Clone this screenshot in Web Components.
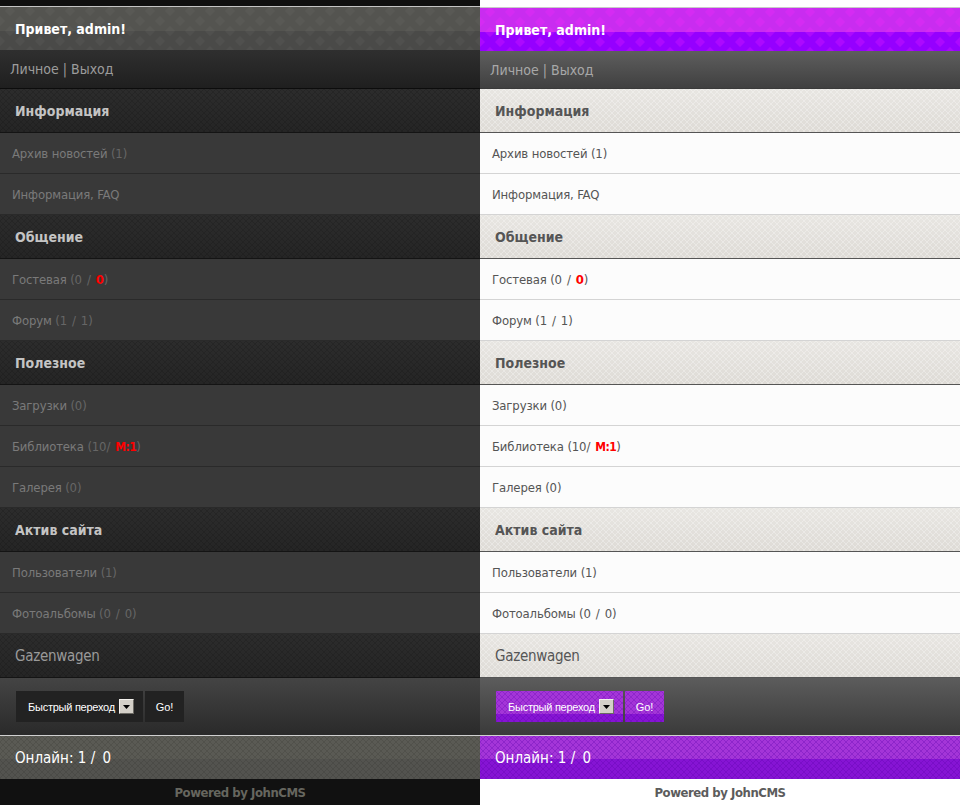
<!DOCTYPE html>
<html lang="ru">
<head>
<meta charset="utf-8">
<title>JohnCMS</title>
<style>
    html, body { margin: 0; padding: 0; }
    body { width: 960px; height: 805px; overflow: hidden; display: flex; font: 13px "DejaVu Sans", sans-serif; font-stretch: condensed; }
</style>
</head>
<body>
<template id="menu">
    <wap-header>Привет, admin!</wap-header>
    <wap-nav>Личное | Выход</wap-nav>
    <wap-section>Информация</wap-section>
    <wap-row>Архив новостей<span slot="count">(1)</span></wap-row>
    <wap-row>Информация, FAQ</wap-row>
    <wap-section>Общение</wap-section>
    <wap-row>Гостевая<span slot="count">(0 / <b style="color:#f00">0</b>)</span></wap-row>
    <wap-row>Форум<span slot="count">(1 / 1)</span></wap-row>
    <wap-section>Полезное</wap-section>
    <wap-row>Загрузки<span slot="count">(0)</span></wap-row>
    <wap-row>Библиотека<span slot="count">(10/ <b style="color:#f00;font-size:12px;letter-spacing:-.5px">М:1</b>)</span></wap-row>
    <wap-row>Галерея<span slot="count">(0)</span></wap-row>
    <wap-section>Актив сайта</wap-section>
    <wap-row>Пользователи<span slot="count">(1)</span></wap-row>
    <wap-row>Фотоальбомы<span slot="count">(0 / 0)</span></wap-row>
    <wap-section thin>Gazenwagen</wap-section>
    <wap-jump></wap-jump>
    <wap-online>Онлайн: 1 <span style="margin-right:3px">/</span> 0</wap-online>
    <wap-footer>Powered by JohnCMS</wap-footer>
</template>
<script>
// Ромбики шапки: плитка 20x20
const diamonds = (fill) => `url("data:image/svg+xml,%3Csvg xmlns='http://www.w3.org/2000/svg' width='20' height='20'%3E%3Cpath fill='${fill}' d='M10 -5l5 5-5 5-5-5zM0 5l5 5-5 5-5-5zM20 5l5 5-5 5-5-5zM10 15l5 5-5 5-5-5z'/%3E%3C/svg%3E")`;
// Мелкая диагональная сетка: плитка 6x6
const hatch = (stroke) => `url("data:image/svg+xml,%3Csvg xmlns='http://www.w3.org/2000/svg' width='6' height='6'%3E%3Cpath stroke='${stroke}' stroke-width='1' fill='none' d='M0 0L6 6M6 0L0 6'/%3E%3C/svg%3E")`;

class WapPanel extends HTMLElement {
    constructor() {
        super();
        this.attachShadow({ mode: 'open' }).innerHTML = `
            <style>
                :host {
                    display: flex; flex-direction: column; width: 480px; height: 805px; background: var(--page);
                    --page:#0f0f0f; --top-h:6px; --top-line:#c4c4c4;
                    --head-a:#545450; --head-b:#4a4a48; --head-dots:${diamonds('rgba(255,255,255,.03)')};
                    --nav-h:39px; --nav-a:#2f2f2f; --nav-b:#1f1f1f; --nav-text:#9c9c9c; --nav-line:#0c0c0c;
                    --sec-a:#2c2c2c; --sec-b:#252525; --sec-hatch:${hatch('rgba(0,0,0,.13)')}; --sec-text:#c4c4c4; --sec-thin:#9a9a9a; --sec-line:#141414;
                    --row:#393939; --row-line:#2a2a2a; --row-text:#7a7a7a; --row-count:#666;
                    --form-a:#444; --form-b:#2a2a2a; --btn-a:#222; --btn-b:#222; --btn-hatch:none;
                    --on-a:#5a5a54; --on-b:#53534f; --on-hatch:${hatch('rgba(0,0,0,.1)')}; --on-line:#d0d0d0;
                    --foot:#111; --foot-text:#66665f;
                }
                :host([theme="light"]) {
                    --page:#fff; --top-h:7px; --top-line:#c8c8c8;
                    --head-a:#c92cf0; --head-b:#9500ff; --head-dots:${diamonds('rgba(255,40,255,.22)')};
                    --nav-h:38px; --nav-a:#5e5e5e; --nav-b:#404040; --nav-text:#a8a8a8; --nav-line:#3a3a3a;
                    --sec-a:#e8e6e2; --sec-b:#dedbd6; --sec-hatch:${hatch('rgba(255,255,255,.3)')}; --sec-text:#555; --sec-thin:#555; --sec-line:#555;
                    --row:#fcfcfc; --row-line:#d4d4d4; --row-text:#555; --row-count:#555;
                    --form-a:#5c5c5c; --form-b:#3a3a3a; --btn-a:#a435d8; --btn-b:#8614d4; --btn-hatch:${hatch('rgba(90,0,170,.28)')};
                    --on-a:#a435d8; --on-b:#8614d4; --on-hatch:${hatch('rgba(90,0,170,.3)')}; --on-line:#d0d0d0;
                    --foot:#fff; --foot-text:#5c5c5c;
                }
                .top { height: var(--top-h); flex: none; }
                .line { height: 1px; flex: none; background: var(--top-line); }
            </style>
            <div class="top"></div>
            <div class="line"></div>
            <slot></slot>
        `;
    }
}

class WapHeader extends HTMLElement {
    constructor() {
        super();
        this.attachShadow({ mode: 'open' }).innerHTML = `
            <style>
                :host {
                    display: flex; align-items: center; height: 43px; padding-left: 15px; box-sizing: border-box;
                    color: #fff; font-weight: bold; font-size: 14px;
                    background: var(--head-dots) 0 4px, linear-gradient(var(--head-a) 0 24px, var(--head-b) 24px);
                }
            </style><slot></slot>`;
    }
}

class WapNav extends HTMLElement {
    constructor() {
        super();
        this.attachShadow({ mode: 'open' }).innerHTML = `
            <style>
                :host {
                    display: flex; align-items: center; height: var(--nav-h); padding-left: 10px; box-sizing: border-box;
                    font-size: 14px; color: var(--nav-text);
                    border-bottom: 1px solid var(--nav-line);
                    background: linear-gradient(var(--nav-a), var(--nav-b));
                }
            </style><slot></slot>`;
    }
}

class WapSection extends HTMLElement {
    constructor() {
        super();
        this.attachShadow({ mode: 'open' }).innerHTML = `
            <style>
                :host {
                    display: flex; align-items: center; height: 44px; padding-left: 15px; box-sizing: border-box;
                    font-size: 14px; font-weight: bold; color: var(--sec-text);
                    border-bottom: 1px solid var(--sec-line);
                    background: var(--sec-hatch), linear-gradient(var(--sec-a), var(--sec-b));
                }
                :host([thin]) { font-weight: normal; font-size: 15px; letter-spacing: -.3px; color: var(--sec-thin); }
            </style><slot></slot>`;
    }
}

class WapRow extends HTMLElement {
    constructor() {
        super();
        this.attachShadow({ mode: 'open' }).innerHTML = `
            <style>
                :host {
                    display: flex; align-items: center; height: 41px; padding-left: 12px; box-sizing: border-box;
                    font-size: 13px; letter-spacing: -.15px; color: var(--row-text);
                    background: var(--row); border-bottom: 1px solid var(--row-line);
                }
                span { color: var(--row-count); word-spacing: 1.5px; }
            </style><div><slot></slot> <span><slot name="count"></slot></span></div>`;
    }
}

class WapJump extends HTMLElement {
    constructor() {
        super();
        this.attachShadow({ mode: 'open' }).innerHTML = `
            <style>
                :host {
                    display: flex; align-items: flex-start; gap: 2px; height: 57px; padding: 13px 0 0 16px; box-sizing: border-box;
                    font: 11px "Liberation Sans", sans-serif; color: #fff;
                    background: linear-gradient(var(--form-a), var(--form-b));
                }
                .box {
                    display: flex; align-items: center; height: 31px; box-sizing: border-box;
                    background: var(--btn-hatch), linear-gradient(var(--btn-a) 0 23px, var(--btn-b) 23px);
                }
                .sel { width: 127px; padding-left: 12px; gap: 4px; letter-spacing: -.25px; }
                .go { width: 39px; justify-content: center; }
                .arrow {
                    width: 15px; height: 15px; box-sizing: border-box; display: flex; align-items: center; justify-content: center;
                    background: #d4d0c8; border: 1px solid; border-color: #f4f2ee #6b6963 #6b6963 #f4f2ee;
                }
                svg { display: block; }
            </style>
            <div class="box sel"><span>Быстрый переход</span>
                <div class="arrow"><svg width="7" height="4" viewBox="0 0 7 4"><path d="M0 0h7L3.5 4z" fill="#000"/></svg></div>
            </div>
            <div class="box go">Go!</div>`;
    }
}

class WapOnline extends HTMLElement {
    constructor() {
        super();
        this.attachShadow({ mode: 'open' }).innerHTML = `
            <style>
                :host {
                    display: flex; align-items: center; height: 44px; padding-left: 15px; box-sizing: border-box;
                    font-size: 15px; color: #fff;
                    border-top: 1px solid var(--on-line);
                    background: var(--on-hatch), linear-gradient(var(--on-a) 0 23px, var(--on-b) 23px);
                }
            </style><div><slot></slot></div>`;
    }
}

class WapFooter extends HTMLElement {
    constructor() {
        super();
        this.attachShadow({ mode: 'open' }).innerHTML = `
            <style>
                :host {
                    display: flex; align-items: center; justify-content: center; height: 26px;
                    font-size: 13px; font-weight: bold; letter-spacing: -.45px; color: var(--foot-text); background: var(--foot);
                }
            </style><slot></slot>`;
    }
}

customElements.define('wap-panel', WapPanel);
customElements.define('wap-header', WapHeader);
customElements.define('wap-nav', WapNav);
customElements.define('wap-section', WapSection);
customElements.define('wap-row', WapRow);
customElements.define('wap-jump', WapJump);
customElements.define('wap-online', WapOnline);
customElements.define('wap-footer', WapFooter);

// Вміст однаковий для обох панелей
for (const theme of ['dark', 'light']) {
    const panel = document.createElement('wap-panel');
    panel.setAttribute('theme', theme);
    panel.appendChild(document.getElementById('menu').content.cloneNode(true));
    document.body.appendChild(panel);
}
</script>
</body>
</html>
